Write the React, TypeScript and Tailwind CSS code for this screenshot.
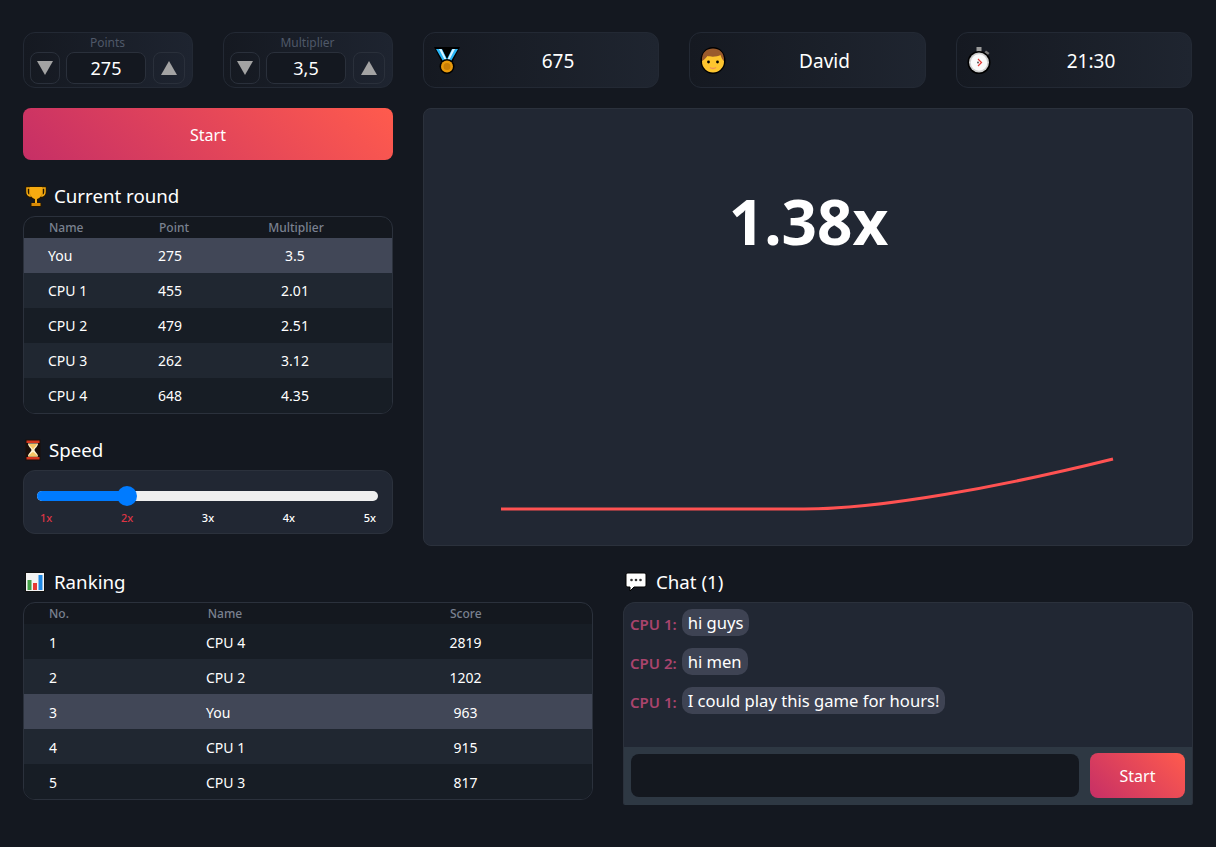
import React from "react";

const FONT = "font-['Noto_Sans','Open_Sans',sans-serif]";
const GRAD = "bg-[linear-gradient(45deg,#c62f66,#ff5b4d)]";

function Tri({ up }: { up?: boolean }) {
  return (
    <svg width="16" height="14" viewBox="0 0 16 14">
      <polygon points={up ? "8,0 16,14 0,14" : "0,0 16,0 8,14"} fill="#a3a3a3" />
    </svg>
  );
}

function Stepper({ label, value }: { label: string; value: string }) {
  return (
    <div className="flex h-14 w-[170px] flex-col items-center rounded-xl border border-[#232934] bg-[linear-gradient(90deg,#151921,#1e2430)] pl-[6px] pr-[7px]">
      <div className="text-xs leading-[19px] text-[#4f5868]">{label}</div>
      <div className="flex w-full">
        <button className="flex h-8 w-[30px] items-center justify-center rounded-lg border border-[#2a303b]"><Tri /></button>
        <div className="ml-[6px] flex h-8 w-20 items-center justify-center rounded-lg border border-[#2a303b] bg-[#141820] text-lg text-white">{value}</div>
        <button className="ml-[7px] flex h-8 w-8 items-center justify-center rounded-lg border border-[#2a303b]"><Tri up /></button>
      </div>
    </div>
  );
}

function Medal() {
  return (
    <svg width="26" height="27" viewBox="0 0 26 27">
      <path d="M0 0h26l-8 16h-10z" fill="#000" />
      <path d="M2 2h6l5 10 5-10h6l-7.500 13h-7z" fill="#29b6f6" />
      <path d="M5 2h2.500L13 13.500 18.500 2H21l-6.500 12.500h-3z" fill="#d8f3ff" />
      <circle cx="13" cy="19.500" r="7.500" fill="#000" />
      <circle cx="13" cy="19.500" r="6" fill="#e89a0c" />
      <circle cx="13" cy="19.500" r="3.500" fill="#c97f05" />
    </svg>
  );
}

function Boy() {
  return (
    <svg width="26" height="27" viewBox="0 0 26 27">
      <ellipse cx="13" cy="13.500" rx="12.500" ry="13.500" fill="#000" />
      <ellipse cx="13" cy="14.500" rx="11" ry="11" fill="#fdc52f" />
      <path d="M2 14C1.500 5 7 1.500 13 1.500S24.500 5 24 14c-1.500-1-2.500-3-3.500-6-3 2-10 2-13 1-1 1-2.500 3.500-5.500 5z" fill="#9a5a2c" />
      <circle cx="8.500" cy="15" r="1.400" fill="#000" />
      <circle cx="17.500" cy="15" r="1.400" fill="#000" />
      <path d="M10 20.500q3 2 6 0" stroke="#ef8f5a" strokeWidth="1.500" fill="none" />
    </svg>
  );
}

function Stopwatch() {
  return (
    <svg width="26" height="27" viewBox="0 0 26 27">
      <rect x="9.500" y="0" width="5" height="5" fill="#9a9a9a" />
      <path d="M19 3.500l3.500 2.500-2 2.500-3.500-2.500z" fill="#777" />
      <circle cx="12" cy="15.500" r="11.500" fill="#000" />
      <circle cx="12" cy="15.500" r="10" fill="#cfcfcf" />
      <circle cx="12" cy="15.500" r="8.300" fill="#fafafa" />
      <path d="M11 12l3.500 3.500-3.500 3.500" stroke="#e53935" strokeWidth="1.200" fill="none" />
      <circle cx="11" cy="15.500" r="1" fill="#555" />
    </svg>
  );
}

function Trophy() {
  return (
    <svg width="22" height="22" viewBox="0 0 22 22">
      <path d="M0.500 1h21v6c0 4-3 6.500-6.500 7l-2.500 1.500v2h2.500l1.500 1.500V22H5.500v-3l1.500-1.500h2.500v-2L7 14C3.500 13.500 0.500 11 0.500 7z" fill="#241803" />
      <path d="M5 2h12v5.500c0 4-3 6-5 6.500v4h-2v-4c-2-.5-5-2.500-5-6.500z" fill="#f7ab10" />
      <path d="M2 3h3v8c-2-.5-3-2.200-3-4.500zM20 3h-3v8c2-.5 3-2.200 3-4.500z" fill="none" stroke="#f7ab10" strokeWidth="1.500" />
      <rect x="6.500" y="18" width="9" height="3" fill="#d98a05" />
    </svg>
  );
}

function Hourglass() {
  return (
    <svg width="16" height="22" viewBox="0 0 16 22">
      <rect x="0.500" y="0.500" width="15" height="21" fill="#1a0f0a" />
      <rect x="1.500" y="1.500" width="13" height="2.500" fill="#d9381e" />
      <rect x="1.500" y="18" width="13" height="2.500" fill="#d9381e" />
      <path d="M3 4.500h10c0 3-3 4.500-3.500 6.500.5 2 3.500 3.500 3.500 6.500H3c0-3 3-4.500 3.500-6.500C6 9 3 7.500 3 4.500z" fill="#fff3d1" />
      <path d="M4 5h8c-.5 2-3 3.500-4 5.500C7 8.500 4.500 7 4 5zM3.500 17.500c.5-2 3-3.500 4.500-4.500 1.500 1 4 2.500 4.500 4.500z" fill="#f7c663" />
    </svg>
  );
}

function BarChart() {
  return (
    <svg width="20" height="20" viewBox="0 0 20 20">
      <rect width="20" height="20" fill="#111" />
      <rect x="1" y="1" width="18" height="18" fill="#f4f4f4" />
      <rect x="2.500" y="8" width="4" height="10" fill="#43a047" />
      <rect x="8" y="11" width="4" height="7" fill="#e53935" />
      <rect x="13.500" y="3" width="4" height="15" fill="#1e88e5" />
    </svg>
  );
}

function Balloon() {
  return (
    <svg width="22" height="22" viewBox="0 0 22 22">
      <path d="M3 2h16c1.300 0 2 .7 2 2v10c0 1.300-.7 2-2 2H9l-4 4v-4H3c-1.300 0-2-.7-2-2V4c0-1.300.7-2 2-2z" fill="#fff" stroke="#000" />
      <circle cx="6.500" cy="9" r="1.300" fill="#333" />
      <circle cx="11" cy="9" r="1.300" fill="#333" />
      <circle cx="15.500" cy="9" r="1.300" fill="#333" />
    </svg>
  );
}

function InfoCard({ icon, text }: { icon: React.ReactNode; text: string }) {
  return (
    <div className="flex h-14 items-center rounded-xl border border-[#232934] bg-[linear-gradient(90deg,#151921,#1f2530)] pl-[10px] pr-px">
      <div className="w-[26px] shrink-0">{icon}</div>
      <div className="flex-1 pt-[2px] pr-px text-center text-[19px] text-white">{text}</div>
    </div>
  );
}

function Title({ icon, text, gap }: { icon: React.ReactNode; text: string; gap: string }) {
  return (
    <div className={`flex h-5 items-center pl-[2px] text-[18.7px] text-white ${gap}`}>
      {icon}
      <span>{text}</span>
    </div>
  );
}

const round = [
  ["You", "275", "3.5"],
  ["CPU 1", "455", "2.01"],
  ["CPU 2", "479", "2.51"],
  ["CPU 3", "262", "3.12"],
  ["CPU 4", "648", "4.35"],
];
const ranking = [
  ["1", "CPU 4", "2819"],
  ["2", "CPU 2", "1202"],
  ["3", "You", "963"],
  ["4", "CPU 1", "915"],
  ["5", "CPU 3", "817"],
];

function Slider() {
  const labels = ["1x", "2x", "3x", "4x", "5x"];
  return (
    <div className="mt-[10px] h-16 rounded-xl border border-[#2b313c] bg-[#212733] pl-[13px] pr-[14px] pt-5">
      <div className="relative h-[10px] rounded-full bg-[#efefef]">
        <div className="h-[10px] w-[90px] rounded-full bg-[#007bff]" />
        <div className="absolute -top-[5px] left-[80px] h-5 w-5 rounded-full bg-[#007bff]" />
      </div>
      <div className="mt-[9px] flex justify-between pl-[3px] pr-[2px] text-[11px] font-medium leading-[16px]">
        {labels.map((l, i) => (
          <span key={l} className={i < 2 ? "text-[#dc3545]" : "text-white"}>{l}</span>
        ))}
      </div>
    </div>
  );
}

function Chat() {
  const msgs = [
    ["CPU 1:", "hi guys"],
    ["CPU 2:", "hi men"],
    ["CPU 1:", "I could play this game for hours!"],
  ];
  return (
    <div className="mt-[10px] flex h-[203px] flex-col overflow-hidden rounded-t-xl rounded-b-[2px] border border-b-0 border-[#2b313c] bg-[#212733]">
      <div className="flex flex-1 flex-col gap-3 px-[6px] pt-[6px]">
        {msgs.map(([who, what], i) => (
          <div key={i} className="flex h-[27px] items-center gap-[5px]">
            <span className="pt-[3px] text-[15px] font-semibold text-[#a9446d]">{who}</span>
            <span className="rounded-[10px] bg-[#3e4353] px-[6px] pt-px text-[16.6px] leading-[26px] text-white">{what}</span>
          </div>
        ))}
      </div>
      <div className="flex h-[58px] items-start gap-[11px] bg-[#2e3843] px-[7px]">
        <div className="mt-[7px] h-[43px] flex-1 rounded-lg bg-[#14181f]" />
        <button className={`mt-[6px] h-[45px] w-[95px] rounded-lg text-base text-white ${GRAD}`}>Start</button>
      </div>
    </div>
  );
}

export default function App() {
  return (
    <div className={`${FONT} min-h-[847px] bg-[#141820] px-[23px] pt-8`}>
      <div className="grid grid-cols-[370px_770px] gap-x-[30px]">
        <div>
          <div className="flex justify-between">
            <Stepper label="Points" value="275" />
            <Stepper label="Multiplier" value="3,5" />
          </div>
          <button className={`mt-5 h-[52px] w-full rounded-lg pt-px text-base text-white ${GRAD}`}>Start</button>
          <div className="mt-[26px]">
            <Title icon={<Trophy />} text="Current round" gap="gap-[7px]" />
          </div>
          <div className="mt-[10px] overflow-hidden rounded-xl border border-[#2b313c] bg-[#14181f]">
            <div className="grid h-[21px] grid-cols-[90px_70px_174px] pl-[25px] text-xs font-medium leading-[21px] text-[#7a8190]">
              <span>Name</span>
              <span className="text-center">Point</span>
              <span className="text-center">Multiplier</span>
            </div>
            {round.map((r, i) => (
              <div
                key={r[0]}
                className={`grid h-[35px] grid-cols-[86px_72px_178px] items-center pl-6 text-sm text-white ${i === 0 ? "bg-[#414757]" : i % 2 === 0 ? "bg-[#171d25]" : "bg-[#202731]"}`}
              >
                <span>{r[0]}</span>
                <span className="text-center">{r[1]}</span>
                <span className="text-center">{r[2]}</span>
              </div>
            ))}
          </div>
          <div className="mt-[26px]">
            <Title icon={<Hourglass />} text="Speed" gap="gap-[8px]" />
          </div>
          <Slider />
        </div>

        <div>
          <div className="grid grid-cols-[236px_237px_236px] gap-x-[30px]">
            <InfoCard icon={<Medal />} text="675" />
            <InfoCard icon={<Boy />} text="David" />
            <InfoCard icon={<Stopwatch />} text="21:30" />
          </div>
          <div className="mt-5 flex h-[438px] flex-col items-center overflow-hidden rounded-lg border border-[#2b313c] bg-[#212733]">
            <div className="mt-[68px] pl-px text-[62px] font-bold leading-[88px] text-white">1.38x</div>
            <svg className="mb-6 mt-auto block" width="768" height="64" viewBox="0 -2 768 64">
              <path d="M77 50H380C456 50 576 28 689 0" fill="none" stroke="#ff5252" strokeWidth="3" />
            </svg>
          </div>
        </div>
      </div>

      <div className="mt-[26px] grid grid-cols-[570px_570px] gap-x-[30px]">
        <div>
          <Title icon={<BarChart />} text="Ranking" gap="gap-[9px]" />
          <div className="mt-[10px] overflow-hidden rounded-xl border border-[#2b313c] bg-[#14181f]">
            <div className="grid h-[21px] grid-cols-[142px_68px_1fr] pl-[25px] text-xs font-medium leading-[21px] text-[#7a8190]">
              <span>No.</span>
              <span className="text-center">Name</span>
              <span className="pl-[191px]">Score</span>
            </div>
            {ranking.map((r, i) => (
              <div
                key={r[0]}
                className={`grid h-[35px] grid-cols-[157px_200px_1fr] items-center pl-[25px] pt-[2px] text-sm text-white ${i === 2 ? "bg-[#414757]" : i % 2 === 0 ? "bg-[#171d25]" : "bg-[#202731]"}`}
              >
                <span>{r[0]}</span>
                <span>{r[1]}</span>
                <span className="w-[119px] text-center">{r[2]}</span>
              </div>
            ))}
          </div>
        </div>
        <div>
          <Title icon={<Balloon />} text="Chat (1)" gap="gap-[9px]" />
          <Chat />
        </div>
      </div>
    </div>
  );
}
